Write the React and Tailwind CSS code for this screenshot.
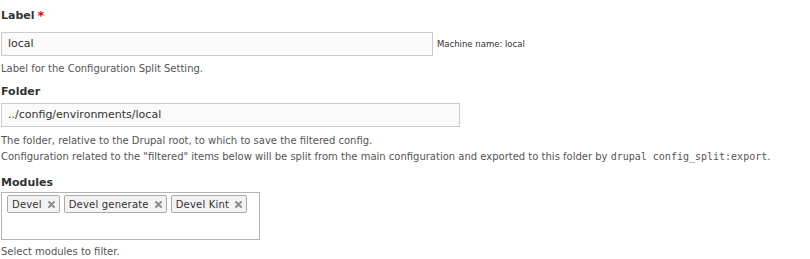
function X() {
  return (
    <svg width="7" height="7" viewBox="0 0 7 7" className="ml-[6px]">
      <path d="M1 1 L6 6 M6 1 L1 6" stroke="#888" strokeWidth="1.8" strokeLinecap="round" />
    </svg>
  );
}

export default function App() {
  const font = { fontFamily: '"DejaVu Sans", Verdana, sans-serif' };
  const tags = ["Devel", "Devel generate", "Devel Kint"];
  return (
    <div className="w-[810px] h-[259px] bg-white text-[#333] pl-[1px] pt-[9px]" style={font}>
      <div className="font-bold text-[11px] leading-[13px] flex items-start">
        Label<span className="text-[#e00] ml-[3px] text-[13px] leading-[13px]">*</span>
      </div>
      <div className="flex items-center mt-[10px] h-[24px]">
        <div className="w-[432px] h-[24px] border border-[#ccc] bg-[#fafafa] flex items-center pl-[6px] text-[11px] text-[#333]">local</div>
        <div className="ml-[4px] text-[8.5px] text-[#333]">Machine name: local</div>
      </div>
      <div className="text-[10px] text-[#555] mt-[6px] leading-[13px]">Label for the Configuration Split Setting.</div>
      <div className="font-bold text-[11px] leading-[13px] mt-[10px]">Folder</div>
      <div className="mt-[5px] w-[459px] h-[24px] border border-[#ccc] bg-[#fafafa] flex items-center pl-[6px] text-[11px] text-[#333]">../config/environments/local</div>
      <div className="text-[10px] text-[#555] mt-[6px] leading-[16px]">The folder, relative to the Drupal root, to which to save the filtered config.</div>
      <div className="text-[10px] text-[#555] leading-[16px]">
        Configuration related to the "filtered" items below will be split from the main configuration and exported to this folder by{" "}
        <code className="text-[10px]" style={{ fontFamily: '"DejaVu Sans Mono", monospace' }}>drupal config_split:export</code>.
      </div>
      <div className="font-bold text-[11px] leading-[13px] mt-[11px]">Modules</div>
      <div className="mt-[3px] w-[259px] h-[48px] border border-[#b5b5b5] bg-white flex items-start gap-[4px] pl-[5px] pt-[2px]">
        {tags.map((t) => (
          <div key={t} className="h-[18px] border border-[#aaa] rounded-[2px] bg-[#f3f3f3] flex items-center pl-[4px] pr-[4px] text-[10px] tracking-[0.2px] text-[#333]">
            {t}<X />
          </div>
        ))}
      </div>
      <div className="text-[10px] text-[#555] mt-[5px] leading-[13px]">Select modules to filter.</div>
    </div>
  );
}
